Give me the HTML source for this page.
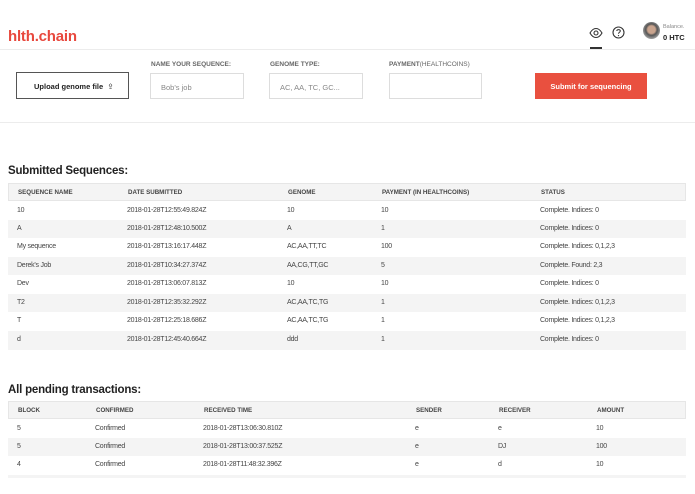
<!DOCTYPE html>
<html><head><meta charset="utf-8"><style>
*{margin:0;padding:0;box-sizing:border-box}
body{width:695px;height:494px;background:#fff;font-family:"Liberation Sans",sans-serif;color:#333;position:relative;overflow:hidden}
.a{position:absolute}
.logo{left:8px;top:28px;font-size:15px;font-weight:bold;color:#e8483d;letter-spacing:-0.2px}
.hl{left:0;top:49px;width:695px;height:1px;background:#ececec}
.lbl{font-size:6.5px;font-weight:bold;color:#666;top:61px}
.inp{top:73px;height:26px;border:1px solid #ddd;font-size:7.5px;color:#888;padding:9px 0 0 10px}
.h2{font-size:11.5px;font-weight:bold;color:#222;letter-spacing:-0.2px}
.row{position:absolute;left:8px;width:678px;font-size:7px;color:#444;letter-spacing:-0.25px}
.row span{position:absolute}
.hd{font-size:6.2px;font-weight:bold;color:#444;letter-spacing:0}
.g{background:#f4f4f4}
</style></head><body>
<div class="a logo">hlth.chain</div>
<svg class="a" style="left:589px;top:27px" width="14" height="12" viewBox="0 0 14 12"><path d="M1 6C3 2.5 5 1.5 7 1.5S11 2.5 13 6C11 9.5 9 10.5 7 10.5S3 9.5 1 6Z" fill="none" stroke="#333" stroke-width="1.1"/><circle cx="7" cy="6" r="2" fill="none" stroke="#333" stroke-width="1.1"/></svg>
<div class="a" style="left:590px;top:47px;width:12px;height:2px;background:#333"></div>
<svg class="a" style="left:612px;top:26px" width="13" height="13" viewBox="0 0 13 13"><circle cx="6.5" cy="6.5" r="5.5" fill="none" stroke="#333" stroke-width="1.1"/><path d="M4.8 5C4.8 3.2 8.3 3.2 8.3 5C8.3 6.3 6.5 6.3 6.5 7.8" fill="none" stroke="#333" stroke-width="1"/><circle cx="6.5" cy="9.6" r=".6" fill="#333"/></svg>
<div class="a" style="left:643px;top:22px;width:17px;height:17px;border-radius:50%;background:radial-gradient(circle at 50% 45%,#c9a48e 0 30%,#555 45%,#999 70%)"></div>
<div class="a" style="left:663px;top:24px;font-size:5.5px;color:#888">Balance.</div>
<div class="a" style="left:663px;top:33px;font-size:7.5px;font-weight:bold;color:#222">0 HTC</div>
<div class="a hl"></div>
<div class="a" style="left:16px;top:72px;width:113px;height:27px;border:1px solid #555;font-size:7.5px;font-weight:bold;color:#222;padding-top:9px;padding-left:17px">Upload genome file &nbsp;<span style="font-weight:normal">⇪</span></div>
<div class="a lbl" style="left:151px">NAME YOUR SEQUENCE:</div>
<div class="a lbl" style="left:270px">GENOME TYPE:</div>
<div class="a lbl" style="left:389px">PAYMENT<span style="font-weight:normal">(HEALTHCOINS)</span></div>
<div class="a inp" style="left:150px;width:94px">Bob's job</div>
<div class="a inp" style="left:269px;width:94px">AC, AA, TC, GC...</div>
<div class="a inp" style="left:389px;width:93px"></div>
<div class="a" style="left:535px;top:73px;width:112px;height:26px;background:#e9503f;color:#fff;font-size:7.5px;font-weight:bold;text-align:center;padding-top:9px">Submit for sequencing</div>
<div class="a" style="left:0;top:122px;width:695px;height:1px;background:#ececec"></div>
<div class="a h2" style="left:8px;top:165px">Submitted Sequences:</div>
<div class="row g hd" style="top:183px;height:18px;border:1px solid #e6e6e6"><span style="left:9px;top:5px">SEQUENCE NAME</span><span style="left:119px;top:5px">DATE SUBMITTED</span><span style="left:279px;top:5px">GENOME</span><span style="left:373px;top:5px">PAYMENT (IN HEALTHCOINS)</span><span style="left:532px;top:5px">STATUS</span></div>
<div class="row" style="top:201px;height:19px"><span style="left:9px;top:6px">10</span><span style="left:119px;top:6px">2018-01-28T12:55:49.824Z</span><span style="left:279px;top:6px">10</span><span style="left:373px;top:6px">10</span><span style="left:532px;top:6px">Complete. Indices: 0</span></div>
<div class="row g" style="top:220px;height:18px"><span style="left:9px;top:5px">A</span><span style="left:119px;top:5px">2018-01-28T12:48:10.500Z</span><span style="left:279px;top:5px">A</span><span style="left:373px;top:5px">1</span><span style="left:532px;top:5px">Complete. Indices: 0</span></div>
<div class="row" style="top:238px;height:19px"><span style="left:9px;top:5px">My sequence</span><span style="left:119px;top:5px">2018-01-28T13:16:17.448Z</span><span style="left:279px;top:5px">AC,AA,TT,TC</span><span style="left:373px;top:5px">100</span><span style="left:532px;top:5px">Complete. Indices: 0,1,2,3</span></div>
<div class="row g" style="top:257px;height:18px"><span style="left:9px;top:5px">Derek's Job</span><span style="left:119px;top:5px">2018-01-28T10:34:27.374Z</span><span style="left:279px;top:5px">AA,CG,TT,GC</span><span style="left:373px;top:5px">5</span><span style="left:532px;top:5px">Complete. Found: 2,3</span></div>
<div class="row" style="top:275px;height:19px"><span style="left:9px;top:5px">Dev</span><span style="left:119px;top:5px">2018-01-28T13:06:07.813Z</span><span style="left:279px;top:5px">10</span><span style="left:373px;top:5px">10</span><span style="left:532px;top:5px">Complete. Indices: 0</span></div>
<div class="row g" style="top:294px;height:18px"><span style="left:9px;top:5px">T2</span><span style="left:119px;top:5px">2018-01-28T12:35:32.292Z</span><span style="left:279px;top:5px">AC,AA,TC,TG</span><span style="left:373px;top:5px">1</span><span style="left:532px;top:5px">Complete. Indices: 0,1,2,3</span></div>
<div class="row" style="top:312px;height:19px"><span style="left:9px;top:5px">T</span><span style="left:119px;top:5px">2018-01-28T12:25:18.686Z</span><span style="left:279px;top:5px">AC,AA,TC,TG</span><span style="left:373px;top:5px">1</span><span style="left:532px;top:5px">Complete. Indices: 0,1,2,3</span></div>
<div class="row g" style="top:331px;height:19px"><span style="left:9px;top:5px">d</span><span style="left:119px;top:5px">2018-01-28T12:45:40.664Z</span><span style="left:279px;top:5px">ddd</span><span style="left:373px;top:5px">1</span><span style="left:532px;top:5px">Complete. Indices: 0</span></div>
<div class="a h2" style="left:8px;top:384px">All pending transactions:</div>
<div class="row g hd" style="top:401px;height:18px;border:1px solid #e6e6e6"><span style="left:9px;top:5px">BLOCK</span><span style="left:87px;top:5px">CONFIRMED</span><span style="left:195px;top:5px">RECEIVED TIME</span><span style="left:407px;top:5px">SENDER</span><span style="left:490px;top:5px">RECEIVER</span><span style="left:588px;top:5px">AMOUNT</span></div>
<div class="row" style="top:419px;height:19px"><span style="left:9px;top:6px">5</span><span style="left:87px;top:6px">Confirmed</span><span style="left:195px;top:6px">2018-01-28T13:06:30.810Z</span><span style="left:407px;top:6px">e</span><span style="left:490px;top:6px">e</span><span style="left:588px;top:6px">10</span></div>
<div class="row g" style="top:438px;height:18px"><span style="left:9px;top:5px">5</span><span style="left:87px;top:5px">Confirmed</span><span style="left:195px;top:5px">2018-01-28T13:00:37.525Z</span><span style="left:407px;top:5px">e</span><span style="left:490px;top:5px">DJ</span><span style="left:588px;top:5px">100</span></div>
<div class="row" style="top:456px;height:19px"><span style="left:9px;top:5px">4</span><span style="left:87px;top:5px">Confirmed</span><span style="left:195px;top:5px">2018-01-28T11:48:32.396Z</span><span style="left:407px;top:5px">e</span><span style="left:490px;top:5px">d</span><span style="left:588px;top:5px">10</span></div>
<div class="row g" style="top:475px;height:3px"></div>
</body></html>
